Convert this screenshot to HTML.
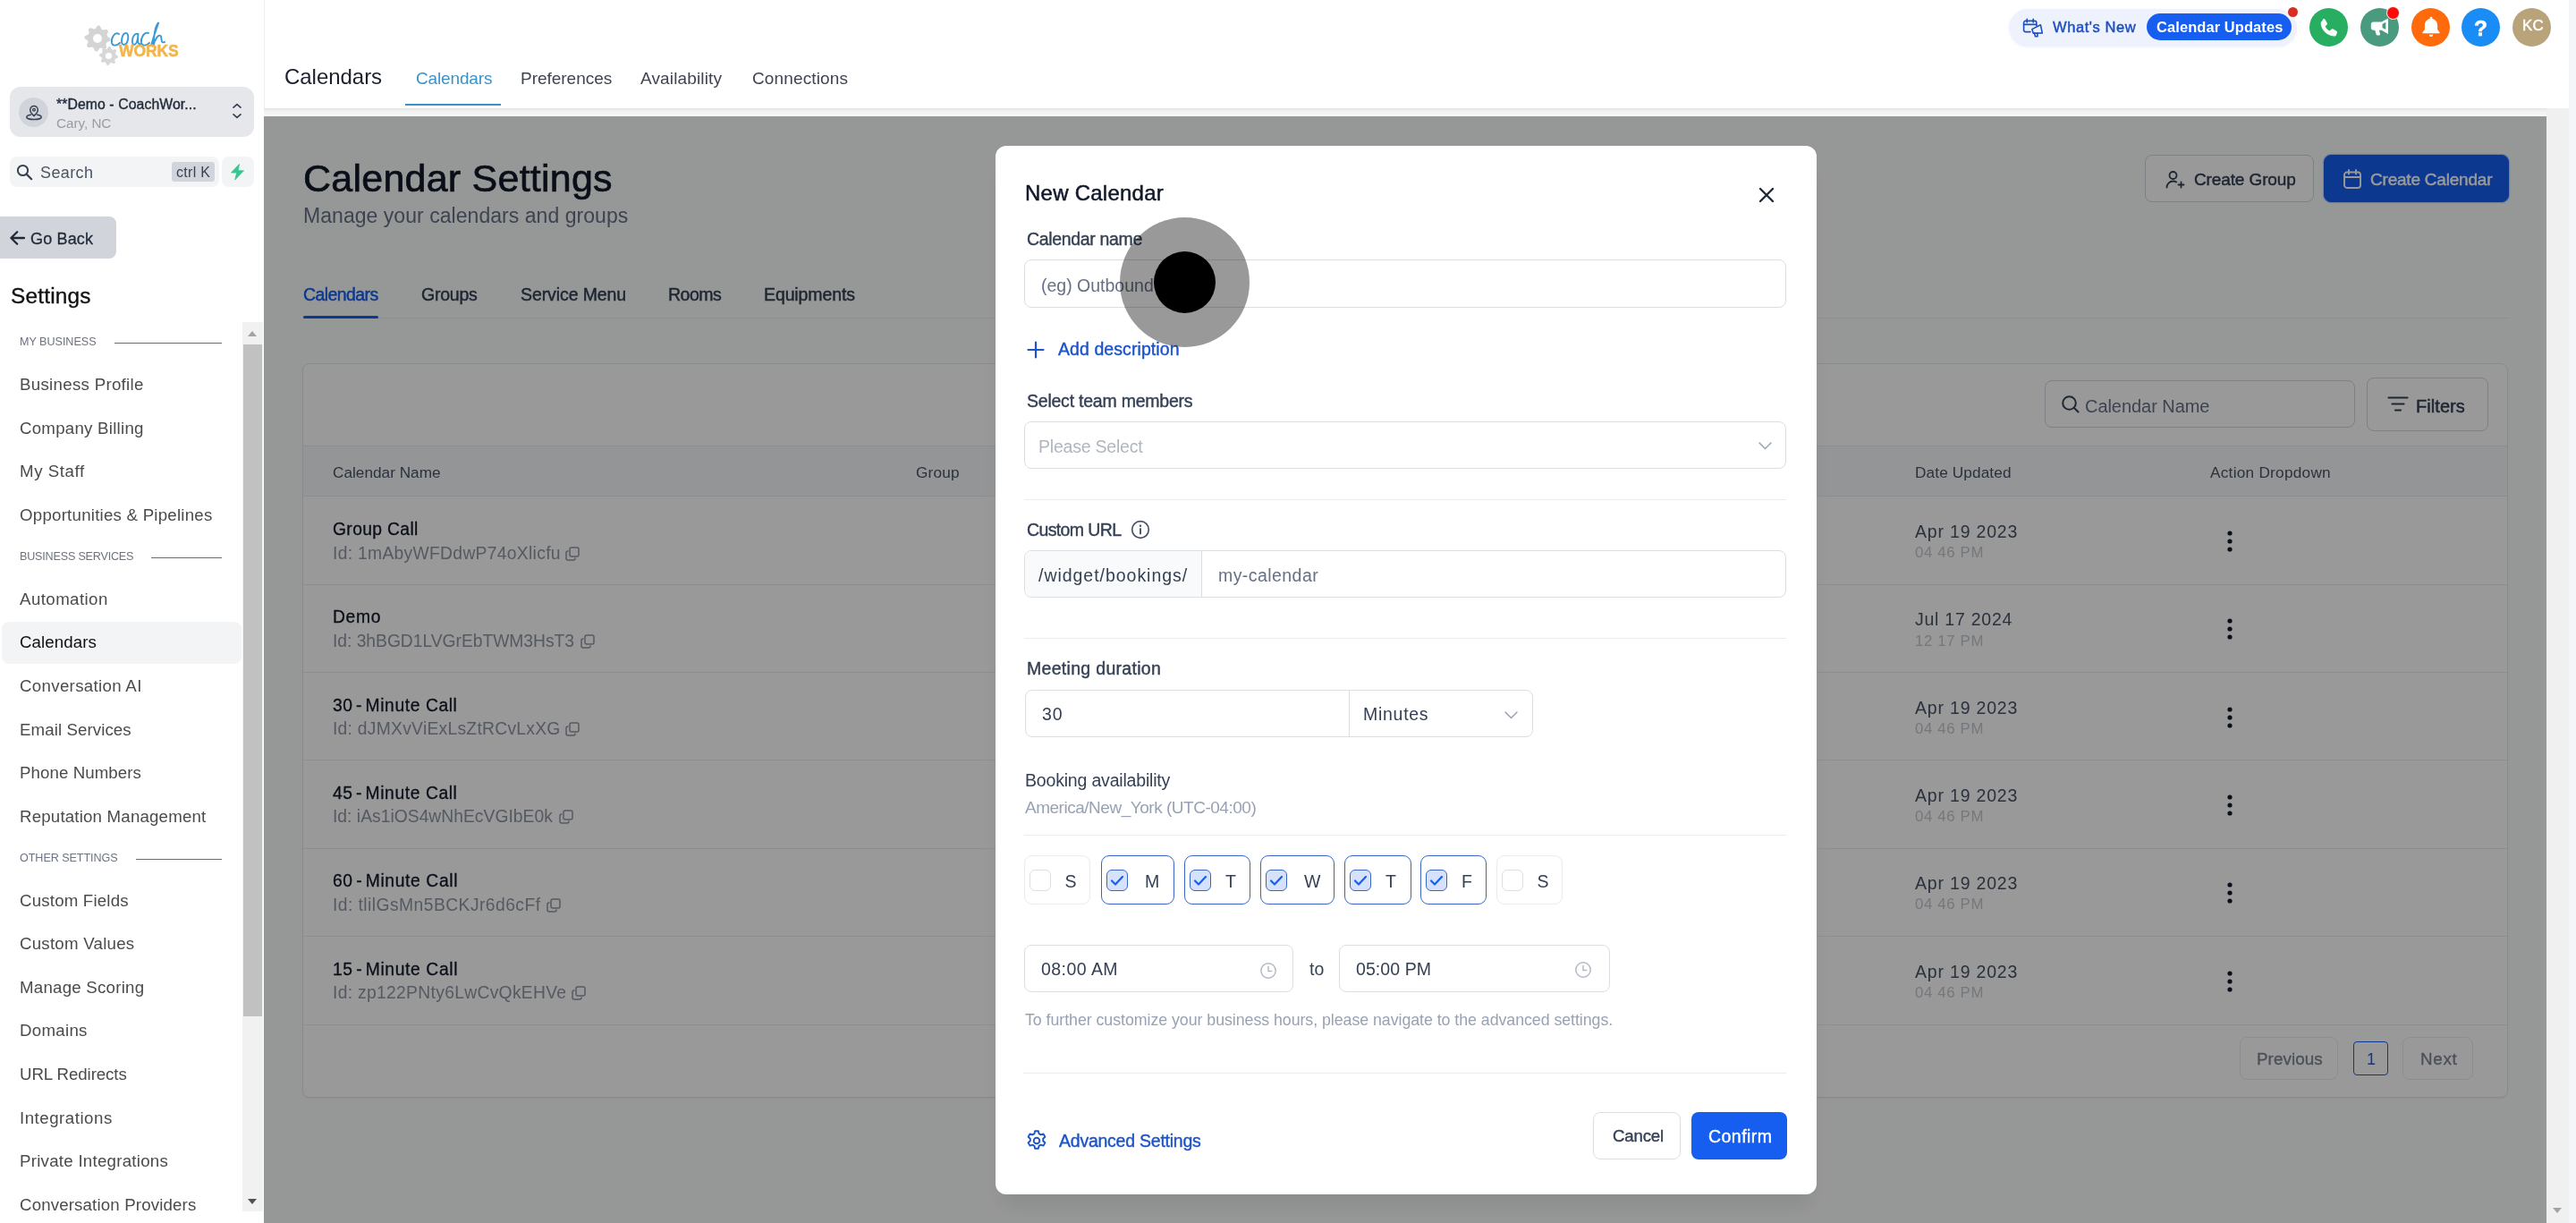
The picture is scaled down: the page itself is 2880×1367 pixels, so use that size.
<!DOCTYPE html>
<html><head><meta charset="utf-8"><style>
html,body{margin:0;padding:0}
body{width:2880px;height:1367px;position:relative;overflow:hidden;background:#fff;font-family:"Liberation Sans",sans-serif}
.t{position:absolute;white-space:nowrap;will-change:transform}
.r{position:absolute}
</style></head><body>
<div class="r" style="left:0px;top:0px;width:295px;height:1367px;background:#fff"></div>
<svg class="r" style="left:90px;top:25px;" width="50" height="52" viewBox="0 0 50 52"><polygon points="19.00,3.50 21.83,3.78 23.33,7.55 25.28,8.60 29.25,7.75 31.06,9.94 29.45,13.67 30.09,15.79 33.50,18.00 33.22,20.83 29.45,22.33 28.40,24.28 29.25,28.25 27.06,30.06 23.33,28.45 21.21,29.09 19.00,32.50 16.17,32.22 14.67,28.45 12.72,27.40 8.75,28.25 6.94,26.06 8.55,22.33 7.91,20.21 4.50,18.00 4.78,15.17 8.55,13.67 9.60,11.72 8.75,7.75 10.94,5.94 14.67,7.55 16.79,6.91" fill="#d4d4d4"/><circle cx="19" cy="18" r="5" fill="#fff"/><polygon points="31.50,27.00 33.55,27.20 34.63,29.93 36.05,30.69 38.92,30.08 40.23,31.67 39.07,34.37 39.53,35.90 42.00,37.50 41.80,39.55 39.07,40.63 38.31,42.05 38.92,44.92 37.33,46.23 34.63,45.07 33.10,45.53 31.50,48.00 29.45,47.80 28.37,45.07 26.95,44.31 24.08,44.92 22.77,43.33 23.93,40.63 23.47,39.10 21.00,37.50 21.20,35.45 23.93,34.37 24.69,32.95 24.08,30.08 25.67,28.77 28.37,29.93 29.90,29.47" fill="#d7d7d7"/><circle cx="31.5" cy="37.5" r="3.6" fill="#fff"/></svg>
<svg class="r" style="left:123px;top:23.5px;" width="64" height="30" viewBox="0 0 64 30"><g fill="none" stroke="#3d9ad6" stroke-width="1.9" stroke-linecap="round" stroke-linejoin="round"><path d="M10 14C5 11 1 19 2 24C3 28 8 27 11 24"/><path d="M18 13C13 13 11 26 15.5 26C20.5 26 22 13 18 13"/><path d="M31 14C25 12 23 26 27 26C29.5 26 31 21 31.5 14C31 20 30.5 26 34 25"/><path d="M43 13C38 11 34 19 35 24C36 28 41 27 44 24"/><path d="M46 27C49 16 53 5 54 2C55 0 51 4 50 12C49 18 48.5 23 48.5 27C50 20 54 14 56.5 16C58.5 18 56 25 61 23"/></g></svg>
<div id="t0" class="t" style="left:133px;top:49px;font-size:17.5px;line-height:17.5px;color:#f2b44c;font-weight:700;-webkit-text-stroke:0.5px #f2b44c;letter-spacing:-0.125px;">WORKS</div>
<div class="r" style="left:11px;top:97px;width:273px;height:56px;background:#e5e7eb;border-radius:12px"></div>
<div class="r" style="left:21px;top:109px;width:33px;height:33px;background:#d1d5db;border-radius:50%"></div>
<svg class="r" style="left:28px;top:117px;" width="20" height="18" viewBox="0 0 20 18"><path d="M10 1.5a4.3 4.3 0 0 1 4.3 4.3c0 3-4.3 6.8-4.3 6.8s-4.3-3.8-4.3-6.8A4.3 4.3 0 0 1 10 1.5z" fill="none" stroke="#374151" stroke-width="1.5"/><circle cx="10" cy="5.8" r="1.4" fill="none" stroke="#374151" stroke-width="1.3"/><path d="M6.3 11.3c-2.8.5-4.5 1.5-4.5 2.6 0 1.5 3.7 2.7 8.2 2.7s8.2-1.2 8.2-2.7c0-1.1-1.7-2.1-4.5-2.6" fill="none" stroke="#374151" stroke-width="1.5" stroke-linecap="round"/></svg>
<div id="t1" class="t" style="left:63px;top:109px;font-size:15.8px;line-height:15.8px;color:#1f2937;font-weight:400;-webkit-text-stroke:0.35px #1f2937;letter-spacing:0.079px;">**Demo - CoachWor...</div>
<div id="t2" class="t" style="left:63px;top:129.5px;font-size:15.2px;line-height:15.2px;color:#999da4;font-weight:400;">Cary, NC</div>
<svg class="r" style="left:259px;top:112px;" width="12" height="24" viewBox="0 0 12 24"><path d="M2 8.2l4-3.6 4 3.6M2 15.8l4 3.6 4-3.6" fill="none" stroke="#374151" stroke-width="1.7" stroke-linecap="round" stroke-linejoin="round"/></svg>
<div class="r" style="left:11px;top:175px;width:233.5px;height:33.5px;background:#f3f4f6;border-radius:8px"></div>
<svg class="r" style="left:18px;top:183px;" width="19" height="19" viewBox="0 0 19 19"><circle cx="7.5" cy="7.5" r="5.6" fill="none" stroke="#374151" stroke-width="2"/><path d="M11.6 11.6l5.6 5.6" stroke="#374151" stroke-width="2.2" stroke-linecap="round"/></svg>
<div id="t3" class="t" style="left:44.6px;top:183.7px;font-size:18px;line-height:18px;color:#4b5563;font-weight:400;letter-spacing:0.400px;">Search</div>
<div class="r" style="left:192px;top:181.3px;width:47.7px;height:21.5px;background:#d1d5db;border-radius:3px"></div>
<div id="t4" class="t" style="left:197.3px;top:185px;font-size:16px;line-height:16px;color:#374151;font-weight:400;letter-spacing:0.300px;">ctrl K</div>
<div class="r" style="left:248px;top:175px;width:35.5px;height:33.5px;background:#f3f4f6;border-radius:8px"></div>
<svg class="r" style="left:256px;top:182px;" width="19" height="20" viewBox="0 0 19 20"><path d="M11.5 1.5L2.5 11h6.2l-2 8 9.8-10.2h-6.3z" fill="#37c48f" stroke="#37c48f" stroke-width="0.8" stroke-linejoin="round"/></svg>
<div class="r" style="left:0px;top:242.4px;width:130px;height:47px;background:#d1d5db;border-radius:0 8px 8px 0"></div>
<svg class="r" style="left:10px;top:257px;" width="19" height="18" viewBox="0 0 19 18"><path d="M17 9H2.8M9.2 2.2L2.4 9l6.8 6.8" fill="none" stroke="#1f2937" stroke-width="2.3" stroke-linecap="round" stroke-linejoin="round"/></svg>
<div id="t5" class="t" style="left:33.6px;top:257.8px;font-size:18px;line-height:18px;color:#1f2937;font-weight:400;-webkit-text-stroke:0.3px #1f2937;letter-spacing:0.167px;">Go Back</div>
<div id="t6" class="t" style="left:11.6px;top:319px;font-size:24.4px;line-height:24.4px;color:#111111;font-weight:400;-webkit-text-stroke:0.35px #111111;letter-spacing:0.200px;">Settings</div>
<div id="t7" class="t" style="left:22px;top:376px;font-size:12.6px;line-height:12.6px;color:#6b7280;font-weight:400;letter-spacing:-0.030px;">MY BUSINESS</div>
<div class="r" style="left:128px;top:383.2px;width:120px;height:1.3px;background:#6b6b6b"></div>
<div id="t8" class="t" style="left:22px;top:616px;font-size:12.6px;line-height:12.6px;color:#6b7280;font-weight:400;letter-spacing:-0.200px;">BUSINESS SERVICES</div>
<div class="r" style="left:169.3px;top:623.2px;width:78.69999999999999px;height:1.3px;background:#6b6b6b"></div>
<div id="t9" class="t" style="left:22px;top:953px;font-size:12.6px;line-height:12.6px;color:#6b7280;font-weight:400;letter-spacing:-0.069px;">OTHER SETTINGS</div>
<div class="r" style="left:152.2px;top:960.2px;width:95.80000000000001px;height:1.3px;background:#6b6b6b"></div>
<div class="r" style="left:1.5px;top:695.3px;width:268px;height:47px;background:#f3f4f6;border-radius:8px"></div>
<div id="t10" class="t" style="left:22px;top:421.1px;font-size:18.7px;line-height:18.7px;color:#4b4b4b;font-weight:400;letter-spacing:0.293px;">Business Profile</div>
<div id="t11" class="t" style="left:22px;top:469.7px;font-size:18.7px;line-height:18.7px;color:#4b4b4b;font-weight:400;letter-spacing:0.243px;">Company Billing</div>
<div id="t12" class="t" style="left:22px;top:518.3px;font-size:18.7px;line-height:18.7px;color:#4b4b4b;font-weight:400;letter-spacing:0.571px;">My Staff</div>
<div id="t13" class="t" style="left:22px;top:567.2px;font-size:18.7px;line-height:18.7px;color:#4b4b4b;font-weight:400;letter-spacing:0.229px;">Opportunities &amp; Pipelines</div>
<div id="t14" class="t" style="left:22px;top:661px;font-size:18.7px;line-height:18.7px;color:#4b4b4b;font-weight:400;letter-spacing:0.422px;">Automation</div>
<div id="t15" class="t" style="left:22px;top:709px;font-size:18.7px;line-height:18.7px;color:#111111;font-weight:400;letter-spacing:0.075px;">Calendars</div>
<div id="t16" class="t" style="left:22px;top:758.2px;font-size:18.7px;line-height:18.7px;color:#4b4b4b;font-weight:400;letter-spacing:0.314px;">Conversation AI</div>
<div id="t17" class="t" style="left:22px;top:806.8px;font-size:18.7px;line-height:18.7px;color:#4b4b4b;font-weight:400;letter-spacing:0.085px;">Email Services</div>
<div id="t18" class="t" style="left:22px;top:855.3px;font-size:18.7px;line-height:18.7px;color:#4b4b4b;font-weight:400;letter-spacing:0.075px;">Phone Numbers</div>
<div id="t19" class="t" style="left:22px;top:904px;font-size:18.7px;line-height:18.7px;color:#4b4b4b;font-weight:400;letter-spacing:0.180px;">Reputation Management</div>
<div id="t20" class="t" style="left:22px;top:997.5px;font-size:18.7px;line-height:18.7px;color:#4b4b4b;font-weight:400;letter-spacing:0.183px;">Custom Fields</div>
<div id="t21" class="t" style="left:22px;top:1046px;font-size:18.7px;line-height:18.7px;color:#4b4b4b;font-weight:400;letter-spacing:0.233px;">Custom Values</div>
<div id="t22" class="t" style="left:22px;top:1094.7px;font-size:18.7px;line-height:18.7px;color:#4b4b4b;font-weight:400;letter-spacing:0.231px;">Manage Scoring</div>
<div id="t23" class="t" style="left:22px;top:1143.4px;font-size:18.7px;line-height:18.7px;color:#4b4b4b;font-weight:400;letter-spacing:0.283px;">Domains</div>
<div id="t24" class="t" style="left:22px;top:1191.8px;font-size:18.7px;line-height:18.7px;color:#4b4b4b;font-weight:400;letter-spacing:-0.083px;">URL Redirects</div>
<div id="t25" class="t" style="left:22px;top:1240.6px;font-size:18.7px;line-height:18.7px;color:#4b4b4b;font-weight:400;letter-spacing:0.509px;">Integrations</div>
<div id="t26" class="t" style="left:22px;top:1288.7px;font-size:18.7px;line-height:18.7px;color:#4b4b4b;font-weight:400;letter-spacing:0.253px;">Private Integrations</div>
<div id="t27" class="t" style="left:22px;top:1337.7px;font-size:18.7px;line-height:18.7px;color:#4b4b4b;font-weight:400;letter-spacing:0.143px;">Conversation Providers</div>
<div class="r" style="left:271px;top:360px;width:23px;height:994px;background:#f1f1f1"></div>
<div class="r" style="left:272px;top:385px;width:21px;height:750.5px;background:#c1c1c1"></div>
<svg class="r" style="left:276px;top:369px;" width="12" height="8" viewBox="0 0 12 8"><path d="M1 7L6 1l5 6z" fill="#a3a3a3"/></svg>
<svg class="r" style="left:276px;top:1339px;" width="12" height="8" viewBox="0 0 12 8"><path d="M1 1l5 6 5-6z" fill="#505050"/></svg>
<div class="r" style="left:295px;top:121px;width:2577px;height:9px;background:linear-gradient(#e4e4e4,#f2f2f2 40%,#f7f7f7)"></div>
<div class="r" style="left:295px;top:0px;width:2577px;height:121px;background:#fff;border-left:1px solid #eceef1;box-sizing:border-box"></div>
<div id="t28" class="t" style="left:317.5px;top:74px;font-size:24px;line-height:24px;color:#1a1f2b;font-weight:400;letter-spacing:-0.037px;">Calendars</div>
<div id="t29" class="t" style="left:464.8px;top:78px;font-size:19px;line-height:19px;color:#3d91c7;font-weight:400;letter-spacing:-0.150px;">Calendars</div>
<div id="t30" class="t" style="left:582.2px;top:78px;font-size:19px;line-height:19px;color:#3f4450;font-weight:400;letter-spacing:-0.020px;">Preferences</div>
<div id="t31" class="t" style="left:716.2px;top:78px;font-size:19px;line-height:19px;color:#3f4450;font-weight:400;letter-spacing:0.145px;">Availability</div>
<div id="t32" class="t" style="left:841.2px;top:78px;font-size:19px;line-height:19px;color:#3f4450;font-weight:400;letter-spacing:0.140px;">Connections</div>
<div class="r" style="left:453px;top:116px;width:107px;height:2px;background:#3d91c7"></div>
<div class="r" style="left:2246px;top:10px;width:321.5px;height:42px;background:#eef2fc;border-radius:21px;box-shadow:0 1px 3px rgba(30,60,140,0.06)"></div>
<svg class="r" style="left:2260.5px;top:19.5px;" width="25" height="23" viewBox="0 0 25 23"><g fill="none" stroke="#1d4fbf" stroke-width="1.6" stroke-linecap="round" stroke-linejoin="round"><path d="M9 15.6H3.6a2 2 0 0 1-2-2V5.4a2 2 0 0 1 2-2h10.2a2 2 0 0 1 2 2v3.4"/><path d="M5.2 1.3v3.6M12.2 1.3v3.6M1.6 7.4h14"/><path d="M10.8 12.6L20.4 7.8l1.9 9.1-10.1.2z"/><path d="M13.6 17.1l.9 3.6h2.5l-.2-3.7"/></g></svg>
<div id="t33" class="t" style="left:2295.4px;top:21.6px;font-size:16.5px;line-height:16.5px;color:#1d4fbf;font-weight:400;-webkit-text-stroke:0.45px #1d4fbf;letter-spacing:0.567px;">What's New</div>
<div class="r" style="left:2400px;top:15px;width:162px;height:30px;background:#155eef;border-radius:15px"></div>
<div id="t34" class="t" style="left:2411px;top:21.6px;font-size:16.4px;line-height:16.4px;color:#ffffff;font-weight:700;letter-spacing:0.127px;">Calendar Updates</div>
<div class="r" style="left:2558px;top:7.5px;width:11px;height:11px;background:#d92d20;border-radius:50%"></div>
<div class="r" style="left:2582px;top:9px;width:43px;height:43px;background:#28ae60;border-radius:50%"></div>
<svg class="r" style="left:2592px;top:19.5px;" width="23" height="23" viewBox="0 0 23 23"><path d="M5.2 1.2c.9-.4 1.9 0 2.4.8l2 3.5c.5.8.3 1.8-.4 2.4l-1.6 1.3c1 2.3 2.9 4.3 5.2 5.4l1.3-1.6c.6-.7 1.6-.9 2.4-.4l3.5 2c.8.5 1.2 1.5.8 2.4l-.8 1.9c-.5 1-1.5 1.7-2.6 1.6C9.5 19.9 3.2 13.6 2.6 6c-.1-1.1.6-2.1 1.6-2.6z" fill="#fff"/></svg>
<div class="r" style="left:2639px;top:9px;width:43px;height:43px;background:#4a9a80;border-radius:50%"></div>
<svg class="r" style="left:2649px;top:19px;" width="24" height="23" viewBox="0 0 24 23"><path d="M21 1.5v17.5l-7.5-4.2h-2.6l1.1 4.4c.2.6-.3 1.2-.9 1.2H8.6c-.5 0-.9-.3-1-.8L6.3 14.8H4.8A3 3 0 0 1 1.8 11.8V8.6a3 3 0 0 1 3-3h8.7z" fill="#fff"/><path d="M18.3 5.8l-3.8 2.2v3.9l3.8 2.2z" fill="#4a9a80"/></svg>
<div class="r" style="left:2667.8px;top:7.4px;width:15px;height:15px;background:#ff0a0a;border-radius:50%;border:1.6px solid #fff;box-sizing:border-box"></div>
<div class="r" style="left:2696px;top:9px;width:43px;height:43px;background:#ff6a0c;border-radius:50%"></div>
<svg class="r" style="left:2705.5px;top:17.5px;" width="24" height="26" viewBox="0 0 24 26"><path d="M12 0.8c.8 0 1.4.6 1.4 1.4v.7c3.4.7 5.7 3.6 5.7 7.1v5l2.4 3c.4.5 0 1.2-.6 1.2H3.1c-.6 0-1-.7-.6-1.2l2.4-3V10c0-3.5 2.3-6.4 5.7-7.1v-.7c0-.8.6-1.4 1.4-1.4z" fill="#fff"/><path d="M9.8 20.8h4.4a2.2 2.2 0 0 1-4.4 0z" fill="#fff"/></svg>
<div class="r" style="left:2752px;top:9px;width:43px;height:43px;background:#1a8cf5;border-radius:50%"></div>
<div id="t35" class="t" style="left:2766px;top:19.5px;font-size:24.5px;line-height:24.5px;color:#ffffff;font-weight:700;-webkit-text-stroke:0.6px #ffffff;">?</div>
<div class="r" style="left:2809px;top:9px;width:43px;height:43px;background:#b8a37b;border-radius:50%"></div>
<div id="t36" class="t" style="left:2819.7px;top:21px;font-size:16.8px;line-height:16.8px;color:#ffffff;font-weight:400;-webkit-text-stroke:0.45px #ffffff;letter-spacing:0.300px;">KC</div>
<div class="r" style="left:2872px;top:0px;width:8px;height:1367px;background:#f3f5f8"></div>
<div class="r" style="left:2847px;top:121px;width:25px;height:1246px;background:#f0f0f0"></div>
<svg class="r" style="left:2853px;top:1349px;" width="12" height="8" viewBox="0 0 12 8"><path d="M1 1l5 6 5-6z" fill="#a3a3a3"/></svg>
<div id="main" class="r" style="left:295px;top:130px;width:2552px;height:1237px;background:#fbfefc;overflow:hidden"></div>
<div id="t37" class="t" style="left:339px;top:177.7px;font-size:43px;line-height:43px;color:#101828;font-weight:400;-webkit-text-stroke:0.7px #101828;letter-spacing:0.238px;">Calendar Settings</div>
<div id="t38" class="t" style="left:339px;top:229.8px;font-size:23px;line-height:23px;color:#667085;font-weight:400;letter-spacing:0.045px;">Manage your calendars and groups</div>
<div class="r" style="left:338px;top:354.5px;width:2466px;height:1.2px;background:#eaecf0"></div>
<div id="t39" class="t" style="left:339px;top:319.7px;font-size:19.5px;line-height:19.5px;color:#155eef;font-weight:400;-webkit-text-stroke:0.45px #155eef;letter-spacing:-0.588px;">Calendars</div>
<div id="t40" class="t" style="left:470.8px;top:319.7px;font-size:19.5px;line-height:19.5px;color:#344054;font-weight:400;-webkit-text-stroke:0.45px #344054;letter-spacing:-0.220px;">Groups</div>
<div id="t41" class="t" style="left:581.6px;top:319.7px;font-size:19.5px;line-height:19.5px;color:#344054;font-weight:400;-webkit-text-stroke:0.45px #344054;letter-spacing:-0.091px;">Service Menu</div>
<div id="t42" class="t" style="left:746.8px;top:319.7px;font-size:19.5px;line-height:19.5px;color:#344054;font-weight:400;-webkit-text-stroke:0.45px #344054;letter-spacing:-0.500px;">Rooms</div>
<div id="t43" class="t" style="left:854px;top:319.7px;font-size:19.5px;line-height:19.5px;color:#344054;font-weight:400;-webkit-text-stroke:0.45px #344054;letter-spacing:-0.111px;">Equipments</div>
<div class="r" style="left:339px;top:352.5px;width:83.5px;height:3px;background:#155eef;border-radius:2px"></div>
<div class="r" style="left:2398.4px;top:173.3px;width:189px;height:53px;background:#fff;border:1px solid #d0d5dd;border-radius:8px;box-sizing:border-box"></div>
<svg class="r" style="left:2420px;top:188.5px;" width="24" height="24" viewBox="0 0 24 24"><g fill="none" stroke="#344054" stroke-width="1.8" stroke-linecap="round"><circle cx="9.5" cy="7" r="4"/><path d="M2.5 20.5c0-3.9 3.1-7 7-7 1.4 0 2.6.4 3.7 1.1"/><path d="M18.5 14.5v6M15.5 17.5h6"/></g></svg>
<div id="t44" class="t" style="left:2452.6px;top:190.5px;font-size:19px;line-height:19px;color:#344054;font-weight:400;-webkit-text-stroke:0.45px #344054;letter-spacing:-0.118px;">Create Group</div>
<div class="r" style="left:2597.8px;top:173.3px;width:207.5px;height:53px;background:#155eef;border:1px solid #155eef;border-radius:8px;box-sizing:border-box;box-shadow:0 0 0 1.2px #c9d7fb"></div>
<svg class="r" style="left:2618px;top:187.5px;" width="24" height="25" viewBox="0 0 24 25"><g fill="none" stroke="#fff" stroke-width="1.9" stroke-linecap="round"><rect x="3" y="4.5" width="18" height="17.5" rx="3"/><path d="M3 10h18M8 2v4.5M16 2v4.5"/></g></svg>
<div id="t45" class="t" style="left:2649.8px;top:190.5px;font-size:19px;line-height:19px;color:#ffffff;font-weight:400;-webkit-text-stroke:0.45px #ffffff;letter-spacing:-0.207px;">Create Calendar</div>
<div class="r" style="left:338px;top:406px;width:2466px;height:821px;background:#fff;border:1px solid #e4e7ec;border-radius:8px;box-sizing:border-box;box-shadow:0 1px 2px rgba(16,24,40,0.06)"></div>
<div class="r" style="left:2285.5px;top:425px;width:347.5px;height:53px;background:#fff;border:1px solid #d0d5dd;border-radius:8px;box-sizing:border-box"></div>
<svg class="r" style="left:2304px;top:441px;" width="22" height="22" viewBox="0 0 22 22"><g fill="none" stroke="#344054" stroke-width="2" stroke-linecap="round"><circle cx="9.5" cy="9.5" r="7.3"/><path d="M15 15l4.5 4.5"/></g></svg>
<div id="t46" class="t" style="left:2331px;top:443.5px;font-size:20px;line-height:20px;color:#667085;font-weight:400;letter-spacing:-0.050px;">Calendar Name</div>
<div class="r" style="left:2646px;top:422px;width:135.6px;height:59.6px;background:#fff;border:1px solid #d0d5dd;border-radius:8px;box-sizing:border-box"></div>
<svg class="r" style="left:2668px;top:441px;" width="26" height="22" viewBox="0 0 26 22"><g stroke="#344054" stroke-width="2.2" stroke-linecap="round"><path d="M2.5 3.5h21M6.5 10.5h13M10 17.5h6"/></g></svg>
<div id="t47" class="t" style="left:2700.8px;top:444px;font-size:20px;line-height:20px;color:#344054;font-weight:400;-webkit-text-stroke:0.5px #344054;letter-spacing:0.067px;">Filters</div>
<div class="r" style="left:339px;top:497.5px;width:2464px;height:57.5px;background:#f7f8fa;border-top:1px solid #eaecf0;border-bottom:1px solid #eaecf0;box-sizing:border-box"></div>
<div id="t48" class="t" style="left:371.7px;top:519.6px;font-size:17.2px;line-height:17.2px;color:#475467;font-weight:400;letter-spacing:0.017px;">Calendar Name</div>
<div id="t49" class="t" style="left:1023.5px;top:519.6px;font-size:17.2px;line-height:17.2px;color:#475467;font-weight:400;letter-spacing:0.200px;">Group</div>
<div id="t50" class="t" style="left:2140.6px;top:519.6px;font-size:17.2px;line-height:17.2px;color:#475467;font-weight:400;letter-spacing:0.127px;">Date Updated</div>
<div id="t51" class="t" style="left:2471px;top:519.6px;font-size:17.2px;line-height:17.2px;color:#475467;font-weight:400;letter-spacing:0.271px;">Action Dropdown</div>
<div id="t52" class="t" style="left:372.2px;top:582.0px;font-size:19.3px;line-height:19.3px;color:#101828;font-weight:400;-webkit-text-stroke:0.3px #101828;letter-spacing:0.356px;">Group Call</div>
<div id="t53" class="t" style="left:372.2px;top:608.5px;font-size:19.3px;line-height:19.3px;color:#8e96a4;font-weight:400;letter-spacing:0.304px;">Id: 1mAbyWFDdwP74oXlicfu</div>
<div id="t54" class="t" style="left:2141px;top:585.0px;font-size:19.5px;line-height:19.5px;color:#475467;font-weight:400;letter-spacing:0.810px;">Apr 19 2023</div>
<div id="t55" class="t" style="left:2141px;top:610.2px;font-size:16.8px;line-height:16.8px;color:#c2c7cf;font-weight:400;letter-spacing:0.657px;">04 46 PM</div>
<svg class="r" style="left:2487px;top:591.0px;" width="12" height="28" viewBox="0 0 12 28"><circle cx="6" cy="5" r="2.6" fill="#101828"/><circle cx="6" cy="14" r="2.6" fill="#101828"/><circle cx="6" cy="23" r="2.6" fill="#101828"/></svg>
<div class="r" style="left:339px;top:652.8px;width:2464px;height:1px;background:#eaecf0"></div>
<div id="t56" class="t" style="left:372.2px;top:680.3px;font-size:19.3px;line-height:19.3px;color:#101828;font-weight:400;-webkit-text-stroke:0.3px #101828;letter-spacing:0.700px;">Demo</div>
<div id="t57" class="t" style="left:372.2px;top:706.8px;font-size:19.3px;line-height:19.3px;color:#8e96a4;font-weight:400;letter-spacing:-0.030px;">Id: 3hBGD1LVGrEbTWM3HsT3</div>
<div id="t58" class="t" style="left:2141px;top:683.3px;font-size:19.5px;line-height:19.5px;color:#475467;font-weight:400;letter-spacing:0.750px;">Jul 17 2024</div>
<div id="t59" class="t" style="left:2141px;top:708.5px;font-size:16.8px;line-height:16.8px;color:#c2c7cf;font-weight:400;letter-spacing:0.657px;">12 17 PM</div>
<svg class="r" style="left:2487px;top:689.3px;" width="12" height="28" viewBox="0 0 12 28"><circle cx="6" cy="5" r="2.6" fill="#101828"/><circle cx="6" cy="14" r="2.6" fill="#101828"/><circle cx="6" cy="23" r="2.6" fill="#101828"/></svg>
<div class="r" style="left:339px;top:751.1px;width:2464px;height:1px;background:#eaecf0"></div>
<div id="t60" class="t" style="left:372.2px;top:778.6px;font-size:19.3px;line-height:19.3px;color:#101828;font-weight:400;-webkit-text-stroke:0.3px #101828;letter-spacing:0.577px;">30<span style="margin:0 3.5px">-</span>Minute Call</div>
<div id="t61" class="t" style="left:372.2px;top:805.1px;font-size:19.3px;line-height:19.3px;color:#8e96a4;font-weight:400;letter-spacing:0.265px;">Id: dJMXvViExLsZtRCvLxXG</div>
<div id="t62" class="t" style="left:2141px;top:781.6px;font-size:19.5px;line-height:19.5px;color:#475467;font-weight:400;letter-spacing:0.810px;">Apr 19 2023</div>
<div id="t63" class="t" style="left:2141px;top:806.8000000000001px;font-size:16.8px;line-height:16.8px;color:#c2c7cf;font-weight:400;letter-spacing:0.657px;">04 46 PM</div>
<svg class="r" style="left:2487px;top:787.6px;" width="12" height="28" viewBox="0 0 12 28"><circle cx="6" cy="5" r="2.6" fill="#101828"/><circle cx="6" cy="14" r="2.6" fill="#101828"/><circle cx="6" cy="23" r="2.6" fill="#101828"/></svg>
<div class="r" style="left:339px;top:849.4px;width:2464px;height:1px;background:#eaecf0"></div>
<div id="t64" class="t" style="left:372.2px;top:876.9px;font-size:19.3px;line-height:19.3px;color:#101828;font-weight:400;-webkit-text-stroke:0.3px #101828;letter-spacing:0.577px;">45<span style="margin:0 3.5px">-</span>Minute Call</div>
<div id="t65" class="t" style="left:372.2px;top:903.4px;font-size:19.3px;line-height:19.3px;color:#8e96a4;font-weight:400;letter-spacing:0.017px;">Id: iAs1iOS4wNhEcVGIbE0k</div>
<div id="t66" class="t" style="left:2141px;top:879.9px;font-size:19.5px;line-height:19.5px;color:#475467;font-weight:400;letter-spacing:0.810px;">Apr 19 2023</div>
<div id="t67" class="t" style="left:2141px;top:905.1px;font-size:16.8px;line-height:16.8px;color:#c2c7cf;font-weight:400;letter-spacing:0.657px;">04 46 PM</div>
<svg class="r" style="left:2487px;top:885.9px;" width="12" height="28" viewBox="0 0 12 28"><circle cx="6" cy="5" r="2.6" fill="#101828"/><circle cx="6" cy="14" r="2.6" fill="#101828"/><circle cx="6" cy="23" r="2.6" fill="#101828"/></svg>
<div class="r" style="left:339px;top:947.7px;width:2464px;height:1px;background:#eaecf0"></div>
<div id="t68" class="t" style="left:372.2px;top:975.2px;font-size:19.3px;line-height:19.3px;color:#101828;font-weight:400;-webkit-text-stroke:0.3px #101828;letter-spacing:0.623px;">60<span style="margin:0 3.5px">-</span>Minute Call</div>
<div id="t69" class="t" style="left:372.2px;top:1001.7px;font-size:19.3px;line-height:19.3px;color:#8e96a4;font-weight:400;letter-spacing:0.443px;">Id: tlilGsMn5BCKJr6d6cFf</div>
<div id="t70" class="t" style="left:2141px;top:978.2px;font-size:19.5px;line-height:19.5px;color:#475467;font-weight:400;letter-spacing:0.810px;">Apr 19 2023</div>
<div id="t71" class="t" style="left:2141px;top:1003.4000000000001px;font-size:16.8px;line-height:16.8px;color:#c2c7cf;font-weight:400;letter-spacing:0.657px;">04 46 PM</div>
<svg class="r" style="left:2487px;top:984.2px;" width="12" height="28" viewBox="0 0 12 28"><circle cx="6" cy="5" r="2.6" fill="#101828"/><circle cx="6" cy="14" r="2.6" fill="#101828"/><circle cx="6" cy="23" r="2.6" fill="#101828"/></svg>
<div class="r" style="left:339px;top:1046.0px;width:2464px;height:1px;background:#eaecf0"></div>
<div id="t72" class="t" style="left:372.2px;top:1073.5px;font-size:19.3px;line-height:19.3px;color:#101828;font-weight:400;-webkit-text-stroke:0.3px #101828;letter-spacing:0.623px;">15<span style="margin:0 3.5px">-</span>Minute Call</div>
<div id="t73" class="t" style="left:372.2px;top:1100.0px;font-size:19.3px;line-height:19.3px;color:#8e96a4;font-weight:400;letter-spacing:0.309px;">Id: zp122PNty6LwCvQkEHVe</div>
<div id="t74" class="t" style="left:2141px;top:1076.5px;font-size:19.5px;line-height:19.5px;color:#475467;font-weight:400;letter-spacing:0.810px;">Apr 19 2023</div>
<div id="t75" class="t" style="left:2141px;top:1101.7px;font-size:16.8px;line-height:16.8px;color:#c2c7cf;font-weight:400;letter-spacing:0.657px;">04 46 PM</div>
<svg class="r" style="left:2487px;top:1082.5px;" width="12" height="28" viewBox="0 0 12 28"><circle cx="6" cy="5" r="2.6" fill="#101828"/><circle cx="6" cy="14" r="2.6" fill="#101828"/><circle cx="6" cy="23" r="2.6" fill="#101828"/></svg>
<div class="r" style="left:339px;top:1144.5px;width:2464px;height:1px;background:#eaecf0"></div>
<svg class="r" style="left:632.2px;top:610.5px" width="16" height="16" viewBox="0 0 16 16"><g fill="none" stroke="#8e96a4" stroke-width="1.5"><rect x="5" y="1" width="10" height="10" rx="2"/><path d="M3.5 5H3a2 2 0 0 0-2 2v6a2 2 0 0 0 2 2h6a2 2 0 0 0 2-2v-.5"/></g></svg>
<svg class="r" style="left:648.5px;top:708.8px" width="16" height="16" viewBox="0 0 16 16"><g fill="none" stroke="#8e96a4" stroke-width="1.5"><rect x="5" y="1" width="10" height="10" rx="2"/><path d="M3.5 5H3a2 2 0 0 0-2 2v6a2 2 0 0 0 2 2h6a2 2 0 0 0 2-2v-.5"/></g></svg>
<svg class="r" style="left:632.3px;top:807.1px" width="16" height="16" viewBox="0 0 16 16"><g fill="none" stroke="#8e96a4" stroke-width="1.5"><rect x="5" y="1" width="10" height="10" rx="2"/><path d="M3.5 5H3a2 2 0 0 0-2 2v6a2 2 0 0 0 2 2h6a2 2 0 0 0 2-2v-.5"/></g></svg>
<svg class="r" style="left:624.6px;top:905.4px" width="16" height="16" viewBox="0 0 16 16"><g fill="none" stroke="#8e96a4" stroke-width="1.5"><rect x="5" y="1" width="10" height="10" rx="2"/><path d="M3.5 5H3a2 2 0 0 0-2 2v6a2 2 0 0 0 2 2h6a2 2 0 0 0 2-2v-.5"/></g></svg>
<svg class="r" style="left:611.4px;top:1003.7px" width="16" height="16" viewBox="0 0 16 16"><g fill="none" stroke="#8e96a4" stroke-width="1.5"><rect x="5" y="1" width="10" height="10" rx="2"/><path d="M3.5 5H3a2 2 0 0 0-2 2v6a2 2 0 0 0 2 2h6a2 2 0 0 0 2-2v-.5"/></g></svg>
<svg class="r" style="left:639.3px;top:1102.0px" width="16" height="16" viewBox="0 0 16 16"><g fill="none" stroke="#8e96a4" stroke-width="1.5"><rect x="5" y="1" width="10" height="10" rx="2"/><path d="M3.5 5H3a2 2 0 0 0-2 2v6a2 2 0 0 0 2 2h6a2 2 0 0 0 2-2v-.5"/></g></svg>
<div class="r" style="left:2503.7px;top:1158.7px;width:110.3px;height:48.3px;background:#fff;border:1px solid #eaecf0;border-radius:8px;box-sizing:border-box"></div>
<div id="t76" class="t" style="left:2522.8px;top:1174.5px;font-size:18.8px;line-height:18.8px;color:#7d8594;font-weight:400;-webkit-text-stroke:0.35px #7d8594;letter-spacing:0.071px;">Previous</div>
<div class="r" style="left:2631px;top:1164px;width:38.6px;height:37.6px;background:#fff;border:1.5px solid #155eef;border-radius:4px;box-sizing:border-box"></div>
<div id="t77" class="t" style="left:2645.5px;top:1175px;font-size:18px;line-height:18px;color:#155eef;font-weight:400;">1</div>
<div class="r" style="left:2686px;top:1158.7px;width:78.5px;height:48.3px;background:#fff;border:1px solid #eaecf0;border-radius:8px;box-sizing:border-box"></div>
<div id="t78" class="t" style="left:2705.6px;top:1174.5px;font-size:18.8px;line-height:18.8px;color:#7d8594;font-weight:400;-webkit-text-stroke:0.35px #7d8594;letter-spacing:0.733px;">Next</div>
<div class="r" style="left:295px;top:130px;width:2552px;height:1237px;background:rgba(0,0,0,0.4)"></div>
<div class="r" style="left:1113px;top:163px;width:918px;height:1172px;background:#fff;border-radius:12px;box-shadow:0 20px 24px -4px rgba(16,24,40,0.08)"></div>
<div id="t79" class="t" style="left:1146px;top:204px;font-size:24px;line-height:24px;color:#101828;font-weight:400;-webkit-text-stroke:0.5px #101828;letter-spacing:0.245px;">New Calendar</div>
<svg class="r" style="left:1965px;top:208px;" width="20" height="20" viewBox="0 0 20 20"><path d="M3 3l14 14M17 3L3 17" stroke="#1d2939" stroke-width="2.4" stroke-linecap="round"/></svg>
<div id="t80" class="t" style="left:1148px;top:258.3px;font-size:19.5px;line-height:19.5px;color:#344054;font-weight:400;-webkit-text-stroke:0.4px #344054;letter-spacing:-0.333px;">Calendar name</div>
<div class="r" style="left:1145px;top:290px;width:852.4px;height:53.6px;background:#fff;border:1px solid #dcdee2;border-radius:8px;box-sizing:border-box"></div>
<div id="t81" class="t" style="left:1164px;top:309.5px;font-size:19.5px;line-height:19.5px;color:#667085;font-weight:400;">(eg) Outbound</div>
<svg class="r" style="left:1147px;top:380px;" width="22" height="22" viewBox="0 0 22 22"><path d="M11 2.5v17M2.5 11h17" stroke="#1c54c9" stroke-width="2.2" stroke-linecap="round"/></svg>
<div id="t82" class="t" style="left:1183.4px;top:381px;font-size:19.5px;line-height:19.5px;color:#1c54c9;font-weight:400;-webkit-text-stroke:0.4px #1c54c9;letter-spacing:0.079px;">Add description</div>
<div id="t83" class="t" style="left:1148px;top:439.3px;font-size:19.5px;line-height:19.5px;color:#344054;font-weight:400;-webkit-text-stroke:0.4px #344054;letter-spacing:-0.228px;">Select team members</div>
<div class="r" style="left:1145.3px;top:471px;width:852px;height:53.4px;background:#fff;border:1px solid #dcdee2;border-radius:8px;box-sizing:border-box"></div>
<div id="t84" class="t" style="left:1161.2px;top:490px;font-size:19.5px;line-height:19.5px;color:#b0b6c0;font-weight:400;letter-spacing:-0.217px;">Please Select</div>
<svg class="r" style="left:1965px;top:492px;" width="17" height="12" viewBox="0 0 17 12"><path d="M2 3l6.5 6.5L15 3" fill="none" stroke="#98a2b3" stroke-width="1.5" stroke-linecap="round" stroke-linejoin="round"/></svg>
<div class="r" style="left:1145px;top:558px;width:852px;height:1.2px;background:#eaecf0"></div>
<div id="t85" class="t" style="left:1148px;top:583.3px;font-size:19.5px;line-height:19.5px;color:#344054;font-weight:400;-webkit-text-stroke:0.4px #344054;letter-spacing:-0.622px;">Custom URL</div>
<svg class="r" style="left:1263.5px;top:581px;" width="22" height="22" viewBox="0 0 22 22"><circle cx="11" cy="11" r="9.3" fill="none" stroke="#475467" stroke-width="1.7"/><path d="M11 10v5.5" stroke="#475467" stroke-width="1.9" stroke-linecap="round"/><circle cx="11" cy="6.8" r="1.2" fill="#475467"/></svg>
<div class="r" style="left:1145.3px;top:615.4px;width:852px;height:53px;border:1px solid #dcdee2;border-radius:8px;box-sizing:border-box;overflow:hidden;background:#fff"><div style="position:absolute;left:0;top:0;width:197px;height:51px;background:#f9fafb;border-right:1px solid #dcdee2"></div></div>
<div id="t86" class="t" style="left:1161px;top:633.6px;font-size:19.5px;line-height:19.5px;color:#344054;font-weight:400;letter-spacing:0.969px;">/widget/bookings/</div>
<div id="t87" class="t" style="left:1362.4px;top:633.6px;font-size:19.5px;line-height:19.5px;color:#667085;font-weight:400;letter-spacing:0.440px;">my-calendar</div>
<div class="r" style="left:1145px;top:712.6px;width:852px;height:1.2px;background:#eaecf0"></div>
<div id="t88" class="t" style="left:1148.4px;top:738px;font-size:19.5px;line-height:19.5px;color:#344054;font-weight:400;-webkit-text-stroke:0.4px #344054;letter-spacing:0.307px;">Meeting duration</div>
<div class="r" style="left:1145.5px;top:770.5px;width:568px;height:53px;border:1px solid #dcdee2;border-radius:8px;box-sizing:border-box;background:#fff"><div style="position:absolute;left:361px;top:0;width:1px;height:51px;background:#dcdee2"></div></div>
<div id="t89" class="t" style="left:1164.5px;top:788.8px;font-size:19.5px;line-height:19.5px;color:#344054;font-weight:400;letter-spacing:0.800px;">30</div>
<div id="t90" class="t" style="left:1524px;top:788.8px;font-size:19.5px;line-height:19.5px;color:#344054;font-weight:400;letter-spacing:0.717px;">Minutes</div>
<svg class="r" style="left:1681px;top:793px;" width="17" height="12" viewBox="0 0 17 12"><path d="M2 3l6.5 6.5L15 3" fill="none" stroke="#98a2b3" stroke-width="1.5" stroke-linecap="round" stroke-linejoin="round"/></svg>
<div id="t91" class="t" style="left:1145.5px;top:863.4px;font-size:19.5px;line-height:19.5px;color:#344054;font-weight:400;letter-spacing:-0.184px;">Booking availability</div>
<div id="t92" class="t" style="left:1145.5px;top:893px;font-size:19px;line-height:19px;color:#98a2b3;font-weight:400;letter-spacing:-0.481px;">America/New_York (UTC-04:00)</div>
<div class="r" style="left:1145px;top:932.6px;width:852px;height:1.2px;background:#eaecf0"></div>
<div class="r" style="left:1145.3px;top:956.2px;width:74.0px;height:55.2px;background:#fff;border:1.3px solid #eaecf0;border-radius:9px;box-sizing:border-box"></div>
<div class="r" style="left:1151.3px;top:971.8px;width:24px;height:24px;background:#fff;border:1.3px solid #dcdee2;border-radius:6px;box-sizing:border-box"></div>
<div id="t93" class="t" style="left:1190px;top:976px;font-size:19.5px;line-height:19.5px;color:#344054;font-weight:400;width:14px;text-align:center">S</div>
<div class="r" style="left:1231.1px;top:956.2px;width:81.5px;height:55.2px;background:#fff;border:1.3px solid #3a66c4;border-radius:9px;box-sizing:border-box"></div>
<div class="r" style="left:1237.1px;top:971.8px;width:24px;height:24px;background:#d6e2fb;border:1.3px solid #3a66c4;border-radius:6px;box-sizing:border-box"></div>
<svg class="r" style="left:1237.1px;top:971.8px;" width="24" height="24" viewBox="0 0 24 24"><path d="M6 12.5l4 4 8-8.5" fill="none" stroke="#155eef" stroke-width="2.2" stroke-linecap="round" stroke-linejoin="round"/></svg>
<div id="t94" class="t" style="left:1279.6px;top:976px;font-size:19.5px;line-height:19.5px;color:#344054;font-weight:400;width:14px;text-align:center">M</div>
<div class="r" style="left:1324px;top:956.2px;width:73.70000000000005px;height:55.2px;background:#fff;border:1.3px solid #3a66c4;border-radius:9px;box-sizing:border-box"></div>
<div class="r" style="left:1330px;top:971.8px;width:24px;height:24px;background:#d6e2fb;border:1.3px solid #3a66c4;border-radius:6px;box-sizing:border-box"></div>
<svg class="r" style="left:1330px;top:971.8px;" width="24" height="24" viewBox="0 0 24 24"><path d="M6 12.5l4 4 8-8.5" fill="none" stroke="#155eef" stroke-width="2.2" stroke-linecap="round" stroke-linejoin="round"/></svg>
<div id="t95" class="t" style="left:1368.5px;top:976px;font-size:19.5px;line-height:19.5px;color:#344054;font-weight:400;width:14px;text-align:center">T</div>
<div class="r" style="left:1409px;top:956.2px;width:82.5px;height:55.2px;background:#fff;border:1.3px solid #3a66c4;border-radius:9px;box-sizing:border-box"></div>
<div class="r" style="left:1415px;top:971.8px;width:24px;height:24px;background:#d6e2fb;border:1.3px solid #3a66c4;border-radius:6px;box-sizing:border-box"></div>
<svg class="r" style="left:1415px;top:971.8px;" width="24" height="24" viewBox="0 0 24 24"><path d="M6 12.5l4 4 8-8.5" fill="none" stroke="#155eef" stroke-width="2.2" stroke-linecap="round" stroke-linejoin="round"/></svg>
<div id="t96" class="t" style="left:1458.3px;top:976px;font-size:19.5px;line-height:19.5px;color:#344054;font-weight:400;width:14px;text-align:center">W</div>
<div class="r" style="left:1502.9px;top:956.2px;width:74.69999999999982px;height:55.2px;background:#fff;border:1.3px solid #3a66c4;border-radius:9px;box-sizing:border-box"></div>
<div class="r" style="left:1508.9px;top:971.8px;width:24px;height:24px;background:#d6e2fb;border:1.3px solid #3a66c4;border-radius:6px;box-sizing:border-box"></div>
<svg class="r" style="left:1508.9px;top:971.8px;" width="24" height="24" viewBox="0 0 24 24"><path d="M6 12.5l4 4 8-8.5" fill="none" stroke="#155eef" stroke-width="2.2" stroke-linecap="round" stroke-linejoin="round"/></svg>
<div id="t97" class="t" style="left:1547.9px;top:976px;font-size:19.5px;line-height:19.5px;color:#344054;font-weight:400;width:14px;text-align:center">T</div>
<div class="r" style="left:1588.2px;top:956.2px;width:73.59999999999991px;height:55.2px;background:#fff;border:1.3px solid #3a66c4;border-radius:9px;box-sizing:border-box"></div>
<div class="r" style="left:1594.2px;top:971.8px;width:24px;height:24px;background:#d6e2fb;border:1.3px solid #3a66c4;border-radius:6px;box-sizing:border-box"></div>
<svg class="r" style="left:1594.2px;top:971.8px;" width="24" height="24" viewBox="0 0 24 24"><path d="M6 12.5l4 4 8-8.5" fill="none" stroke="#155eef" stroke-width="2.2" stroke-linecap="round" stroke-linejoin="round"/></svg>
<div id="t98" class="t" style="left:1633px;top:976px;font-size:19.5px;line-height:19.5px;color:#344054;font-weight:400;width:14px;text-align:center">F</div>
<div class="r" style="left:1673.2px;top:956.2px;width:74.0px;height:55.2px;background:#fff;border:1.3px solid #eaecf0;border-radius:9px;box-sizing:border-box"></div>
<div class="r" style="left:1679.2px;top:971.8px;width:24px;height:24px;background:#fff;border:1.3px solid #dcdee2;border-radius:6px;box-sizing:border-box"></div>
<div id="t99" class="t" style="left:1718.2px;top:976px;font-size:19.5px;line-height:19.5px;color:#344054;font-weight:400;width:14px;text-align:center">S</div>
<div class="r" style="left:1145.3px;top:1055.6px;width:301px;height:53px;background:#fff;border:1px solid #dcdee2;border-radius:8px;box-sizing:border-box"></div>
<div class="r" style="left:1497.3px;top:1055.6px;width:302.3px;height:53px;background:#fff;border:1px solid #dcdee2;border-radius:8px;box-sizing:border-box"></div>
<svg class="r" style="left:1407.8px;top:1074.6px;" width="20" height="20" viewBox="0 0 20 20"><circle cx="10" cy="10" r="8.2" fill="none" stroke="#b3bac5" stroke-width="1.5"/><path d="M10 5.5V10.5h3.8" fill="none" stroke="#b3bac5" stroke-width="1.5" stroke-linecap="round"/></svg>
<svg class="r" style="left:1759.5px;top:1074.4px;" width="20" height="20" viewBox="0 0 20 20"><circle cx="10" cy="10" r="8.2" fill="none" stroke="#b3bac5" stroke-width="1.5"/><path d="M10 5.5V10.5h3.8" fill="none" stroke="#b3bac5" stroke-width="1.5" stroke-linecap="round"/></svg>
<div id="t100" class="t" style="left:1164.3px;top:1074px;font-size:19.5px;line-height:19.5px;color:#344054;font-weight:400;letter-spacing:0.457px;">08:00 AM</div>
<div id="t101" class="t" style="left:1464px;top:1074px;font-size:19.5px;line-height:19.5px;color:#344054;font-weight:400;letter-spacing:0.200px;">to</div>
<div id="t102" class="t" style="left:1516.3px;top:1074px;font-size:19.5px;line-height:19.5px;color:#344054;font-weight:400;letter-spacing:0.071px;">05:00 PM</div>
<div id="t103" class="t" style="left:1146px;top:1132px;font-size:17.8px;line-height:17.8px;color:#98a2b3;font-weight:400;letter-spacing:-0.049px;">To further customize your business hours, please navigate to the advanced settings.</div>
<div class="r" style="left:1144px;top:1198.8px;width:853px;height:1.2px;background:#eaecf0"></div>
<svg class="r" style="left:1145.5px;top:1262px;" width="26" height="26" viewBox="0 0 26 26"><g fill="none" stroke="#1c54c9" stroke-width="1.9" stroke-linejoin="round"><path d="M11.1 2.2h3.8l.6 2.9 2.2 1.3 2.8-1 1.9 3.3-2.2 2v2.6l2.2 2-1.9 3.3-2.8-1-2.2 1.3-.6 2.9h-3.8l-.6-2.9-2.2-1.3-2.8 1-1.9-3.3 2.2-2v-2.6l-2.2-2 1.9-3.3 2.8 1 2.2-1.3z"/><circle cx="13" cy="13" r="3.3"/></g></svg>
<div id="t104" class="t" style="left:1183.8px;top:1266.2px;font-size:19.5px;line-height:19.5px;color:#1c54c9;font-weight:400;-webkit-text-stroke:0.4px #1c54c9;letter-spacing:-0.238px;">Advanced Settings</div>
<div class="r" style="left:1781.3px;top:1243.2px;width:98px;height:53.2px;background:#fff;border:1px solid #dcdee2;border-radius:8px;box-sizing:border-box"></div>
<div id="t105" class="t" style="left:1802.7px;top:1261.3px;font-size:18.6px;line-height:18.6px;color:#344054;font-weight:400;-webkit-text-stroke:0.4px #344054;letter-spacing:-0.140px;">Cancel</div>
<div class="r" style="left:1891.2px;top:1243.2px;width:106.4px;height:53.2px;background:#155eef;border-radius:8px"></div>
<div id="t106" class="t" style="left:1910px;top:1261.3px;font-size:19.5px;line-height:19.5px;color:#ffffff;font-weight:400;-webkit-text-stroke:0.4px #ffffff;letter-spacing:0.467px;">Confirm</div>
<div class="r" style="left:1252.2px;top:243.3px;width:144.6px;height:144.6px;background:rgba(0,0,0,0.4);border-radius:50%"></div>
<div class="r" style="left:1290.0px;top:281.1px;width:69px;height:69px;background:#000;border-radius:50%"></div>
</body></html>
